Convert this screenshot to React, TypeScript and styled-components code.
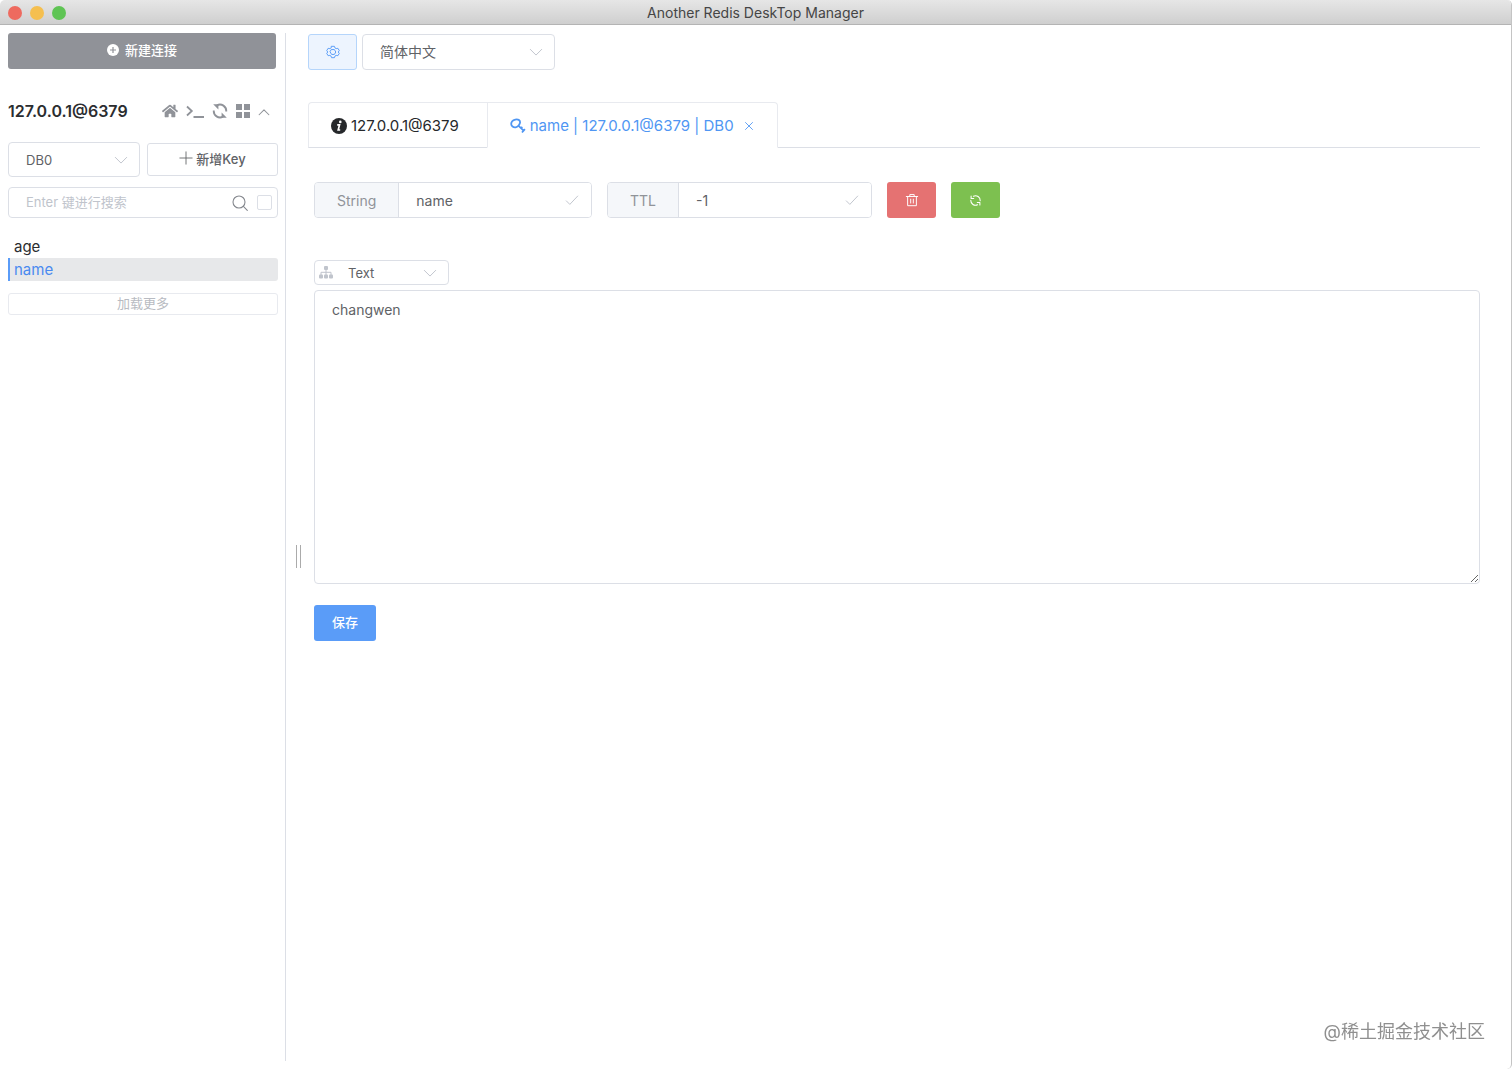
import React, { useState } from "react";
import styled, { createGlobalStyle, css } from "styled-components";
import { FaHome } from "react-icons/fa";

const palette = {
  text: "#606266",
  dark: "#2b2d30",
  muted: "#909399",
  placeholder: "#c0c4cc",
  border: "#dcdfe6",
  lightBorder: "#e8eaef",
  primary: "#5a9cf8",
  danger: "#e57272",
  success: "#7dc050",
  info: "#909298",
};

const GlobalStyle = createGlobalStyle`
  *, *::before, *::after { box-sizing: border-box; }
  body {
    margin: 0;
    background: #fff;
    color: ${palette.dark};
    font-family: Inter, "Noto Sans CJK SC", sans-serif;
    font-size: 15px;
  }
  button, input, select, textarea { font: inherit; color: inherit; margin: 0; }
  button { cursor: pointer; padding: 0; }
`;

const Window = styled.div`
  min-height: 100vh;
  display: flex;
  flex-direction: column;
  border-right: 1px solid #c4c4c4;
  border-radius: 5px;
  overflow: hidden;
`;

const TitleBar = styled.header`
  height: 25px;
  display: grid;
  grid-template-columns: 1fr auto 1fr;
  align-items: center;
  padding: 1px 8px 0 8px;
  background: linear-gradient(#e6e6e6, #cfcfcf);
  border-bottom: 1px solid #b4b4b4;
`;

const Lights = styled.div`
  display: flex;
  gap: 8px;
`;

const Light = styled.button<{ $color: string }>`
  width: 14px;
  height: 14px;
  border: 0;
  border-radius: 50%;
  background: ${(p) => p.$color};
`;

const WindowTitle = styled.h1`
  margin: 0;
  font-size: 14px;
  line-height: 20px;
  font-weight: 400;
  color: #454545;
`;

const Body = styled.div`
  flex: 1;
  display: flex;
  padding: 8px 0;
`;

const Sidebar = styled.aside`
  flex: 0 0 286px;
  border-right: 1px solid ${palette.border};
  padding: 0 7px 0 8px;
`;

const buttonBase = css`
  display: flex;
  align-items: center;
  justify-content: center;
  border-radius: 3px;
  font-size: 13px;
`;

const textButton = css`
  ${buttonBase}
  padding-bottom: 3px;
`;

const NewConnection = styled.button`
  ${textButton}
  width: calc(100% - 2px);
  height: 36px;
  gap: 6px;
  border: 0;
  color: #fff;
  background: ${palette.info};
  font-weight: 500;
`;

const ConnectionHead = styled.div`
  display: flex;
  align-items: center;
  justify-content: space-between;
  height: 24px;
  margin-top: 30px;
  padding-right: 8px;
`;

const ConnectionName = styled.h2`
  margin: 0;
  font-size: 16px;
  line-height: 24px;
  font-weight: 600;
`;

const IconRow = styled.div`
  display: flex;
  align-items: center;
  gap: 8px;
  color: ${palette.muted};
`;

const IconButton = styled.button`
  display: flex;
  border: 0;
  background: none;
`;

const Row = styled.div<{ $gap: number; $top?: number }>`
  display: flex;
  align-items: center;
  gap: ${(p) => p.$gap}px;
  margin-top: ${(p) => p.$top ?? 0}px;
`;

type Size = "mini" | "small" | "medium";

const SelectBox = styled.div<{ $width: number }>`
  position: relative;
  flex: 0 0 ${(p) => p.$width}px;
`;

const heights: Record<Size, number> = { mini: 25, small: 35, medium: 36 };

const NativeSelect = styled.select<{ $size: Size; $indent: number }>`
  display: block;
  appearance: none;
  width: 100%;
  height: ${(p) => heights[p.$size]}px;
  padding: 0 30px ${(p) => (p.$size === "medium" ? 2 : 0)}px ${(p) => p.$indent}px;
  border: 1px solid ${palette.border};
  border-radius: 4px;
  background: #fff;
  color: ${palette.text};
  font-size: ${(p) => (p.$size === "medium" ? 14 : 13)}px;
`;

const Affix = styled.span<{ $side: "left" | "right"; $offset: number }>`
  position: absolute;
  top: 0;
  bottom: 0;
  ${(p) => p.$side}: ${(p) => p.$offset}px;
  display: flex;
  align-items: center;
  color: ${palette.placeholder};
  pointer-events: none;
`;

const NewKey = styled.button`
  ${textButton}
  flex: 1 1 0;
  height: 33px;
  gap: 3px;
  border: 1px solid ${palette.border};
  background: #fff;
  color: ${palette.text};
  font-weight: 500;
`;

const SearchBox = styled.div`
  display: flex;
  align-items: center;
  height: 31px;
  margin-top: 10px;
  padding: 0 5px 0 17px;
  border: 1px solid ${palette.border};
  border-radius: 4px;
  color: #85888e;
`;

const SearchInput = styled.input`
  flex: 1;
  min-width: 0;
  border: 0;
  padding: 0 0 2px;
  outline: 0;
  background: none;
  font-size: 13px;
  &::placeholder { color: ${palette.placeholder}; }
`;

const ExactCheck = styled.input`
  appearance: none;
  width: 15px;
  height: 15px;
  margin-left: 9px;
  border: 1px solid ${palette.border};
  border-radius: 2px;
  &:checked { background: ${palette.primary}; }
`;

const KeyList = styled.ul`
  list-style: none;
  margin: 17px 0 0;
  padding: 0;
`;

const KeyItem = styled.button<{ $active: boolean }>`
  display: block;
  width: 100%;
  height: 23px;
  padding: 0 4px;
  border: 0;
  border-left: 2px solid ${(p) => (p.$active ? palette.primary : "transparent")};
  border-radius: 0 3px 3px 0;
  background: ${(p) => (p.$active ? "#e7e8ea" : "none")};
  color: ${(p) => (p.$active ? "#4a8af0" : palette.dark)};
  text-align: left;
  line-height: 24px;
`;

const LoadMore = styled.button`
  ${textButton}
  width: 100%;
  height: 22px;
  margin-top: 12px;
  border: 1px solid ${palette.lightBorder};
  background: #fff;
  color: #b8bbc2;
`;

const Splitter = styled.div`
  flex: 0 0 22px;
  display: flex;
  align-items: center;
  justify-content: center;
  padding: 18px 0 0 3px;
  cursor: col-resize;
  &::before {
    content: "";
    width: 5px;
    height: 23px;
    border: solid #ababab;
    border-width: 0 1px;
  }
`;

const Main = styled.main`
  flex: 1;
  min-width: 0;
  padding: 1px 31px 0 0;
`;

const SettingsButton = styled.button`
  ${buttonBase}
  width: 49px;
  height: 36px;
  border: 1px solid #b5d5fb;
  background: #edf4fe;
  color: ${palette.primary};
`;

const Tabs = styled.div`
  display: flex;
  height: 46px;
  margin-top: 32px;
  border-bottom: 1px solid ${palette.border};
`;

const Tab = styled.button<{ $active: boolean }>`
  display: flex;
  align-items: center;
  height: 46px;
  gap: 4px;
  padding: 1px ${(p) => (p.$active ? 21 : 28)}px 0 22px;
  border: 1px solid ${palette.lightBorder};
  border-right-width: ${(p) => (p.$active ? 1 : 0)}px;
  border-bottom-color: ${(p) => (p.$active ? "#fff" : palette.border)};
  border-radius: ${(p) => (p.$active ? "0 4px 0 0" : "4px 0 0 0")};
  background: #fff;
  color: ${(p) => (p.$active ? "#4f96f3" : "#26282b")};
  white-space: nowrap;
`;

const CloseMark = styled.span`
  display: flex;
  margin-left: 4px;
`;

const Panel = styled.section`
  padding: 34px 0 0 6px;
`;

const Group = styled.label<{ $width: number }>`
  display: flex;
  position: relative;
  width: ${(p) => p.$width}px;
  height: 36px;
  border: 1px solid ${palette.border};
  border-radius: 4px;
  overflow: hidden;
`;

const Prepend = styled.span`
  display: flex;
  align-items: center;
  padding: 0 22px;
  border-right: 1px solid ${palette.border};
  background: #f5f7fa;
  color: ${palette.muted};
  font-size: 14px;
`;

const GroupInput = styled.input`
  flex: 1;
  min-width: 0;
  padding: 0 34px 0 17px;
  border: 0;
  outline: 0;
  color: ${palette.text};
  font-size: 14px;
`;

const ActionButton = styled.button<{ $color: string }>`
  ${buttonBase}
  width: 49px;
  height: 36px;
  border: 0;
  color: #fff;
  background: ${(p) => p.$color};
`;

const ValueArea = styled.textarea`
  display: block;
  width: 100%;
  height: 294px;
  margin-top: 5px;
  padding: 8px 17px;
  border: 1px solid ${palette.border};
  border-radius: 4px;
  outline: 0;
  resize: vertical;
  color: ${palette.text};
  font-size: 14px;
  line-height: 22px;
`;

const SaveButton = styled.button`
  ${textButton}
  width: 62px;
  height: 36px;
  margin-top: 21px;
  border: 0;
  color: #fff;
  background: ${palette.primary};
  font-weight: 500;
`;

const Watermark = styled.div`
  position: fixed;
  right: 27px;
  bottom: 24px;
  font-size: 18px;
  line-height: 26px;
  color: #8f8f8f;
  pointer-events: none;
`;

interface LineIconProps {
  size: number;
  width?: number;
  children: React.ReactNode;
}

const LineIcon = ({ size, width = 1, children }: LineIconProps) => (
  <svg
    width={size}
    height={size}
    viewBox="0 0 16 16"
    fill="none"
    stroke="currentColor"
    strokeWidth={width}
    strokeLinecap="round"
    strokeLinejoin="round"
    aria-hidden="true"
  >
    {children}
  </svg>
);

const Chevron = () => (
  <LineIcon size={14} width={1.1}><path d="M1.5 5 8 11.5 14.5 5" /></LineIcon>
);
const Check = () => (
  <LineIcon size={14} width={1.1}><path d="M1.5 9 5.5 13 14.5 3.5" /></LineIcon>
);
const PlusCircle = () => (
  <svg width="12" height="12" viewBox="0 0 12 12" aria-hidden="true">
    <circle cx="6" cy="6" r="6" fill="currentColor" />
    <path d="M3 6h6M6 3v6" stroke={palette.info} strokeWidth="1.2" />
  </svg>
);
const Terminal = () => (
  <svg width="18" height="16" viewBox="0 0 18 16" fill="none" stroke="currentColor" strokeWidth="1.8" aria-hidden="true">
    <path d="M1 3.5 5.8 8 1 12.5M7.5 14H18" />
  </svg>
);
const RefreshBold = () => (
  <svg width="16" height="16" viewBox="0 0 16 16" aria-hidden="true">
    <path d="M5 2.300A6.300 6.300 0 0 1 14.200 8.500M11 13.700A6.300 6.300 0 0 1 1.800 7.500" fill="none" stroke="currentColor" strokeWidth="1.9" />
    <path d="M1.200 1.200h5.200v5.200zM14.800 14.800H9.600V9.600z" fill="currentColor" />
  </svg>
);
const Grid = () => (
  <svg width="14" height="14" viewBox="0 0 14 14" fill="currentColor" aria-hidden="true">
    <path d="M0 0h6v6H0zM8 0h6v6H8zM0 8h6v6H0zM8 8h6v6H8z" />
  </svg>
);
const Gear = () => (
  <LineIcon size={14} width={1.1}>
    <path d="M6.4 1.5h3.2l.7 1.9 1.3.7 2-.3 1.6 2.7-1.3 1.5 1.3 1.5-1.6 2.7-2-.3-1.3.7-.7 1.9H6.4l-.7-1.9-1.3-.7-2 .3L.8 9.5 2.1 8 .8 6.5l1.6-2.7 2 .3 1.3-.7z" />
    <path d="M6.4 5.2h3.2L11.2 8l-1.6 2.8H6.4L4.8 8z" />
  </LineIcon>
);
const Info = () => (
  <svg width="16" height="16" viewBox="0 0 16 16" aria-hidden="true">
    <circle cx="8" cy="8" r="8" fill="currentColor" />
    <circle cx="9.3" cy="3.9" r="1.3" fill="#fff" />
    <path d="M6.200 6.900h2.300L7.200 12h2" fill="none" stroke="#fff" strokeWidth="1.700" />
  </svg>
);
const KeyIcon = () => (
  <svg width="16" height="16" viewBox="0 0 16 16" fill="none" stroke="currentColor" strokeWidth="1.8" aria-hidden="true">
    <path d="M5.3 1.6c2.600-.7 5 .5 4.800 2.800C9.900 6.500 7.800 9 5.600 9.300 3.300 9.600 1.200 8 1.200 5.900 1.200 3.900 3.200 2.200 5.300 1.600z" />
    <path d="M8.300 7.600 14.200 13.200M12.300 8.800l-1.500 1.500M14.900 11.200l-2.900 3.300" />
  </svg>
);
const Trash = () => (
  <LineIcon size={14} width={1.1}>
    <path d="M1.500 4h13M5.500 4V1.800h5V4M3 4v10.500h10V4M6.500 7v4.500M9.500 7v4.500" />
  </LineIcon>
);
const Refresh = () => (
  <LineIcon size={13} width={1.3}>
    <path d="M5.500 2.700A5.800 5.800 0 0 1 13.800 8.200M10.500 13.300A5.800 5.800 0 0 1 2.200 7.800M5.800 5.600H2.600V2.400M10.200 10.400h3.200v3.200" />
  </LineIcon>
);
const Sitemap = () => (
  <svg width="14" height="13" viewBox="0 0 14 13" fill="currentColor" aria-hidden="true">
    <rect x="5" y="0" width="4" height="4" rx="1" />
    <rect x="0" y="8.500" width="4" height="4" rx="1" />
    <rect x="5" y="8.500" width="4" height="4" rx="1" />
    <rect x="10" y="8.500" width="4" height="4" rx="1" />
    <path d="M7 4v5M2 9V6.300h10V9" fill="none" stroke="currentColor" strokeWidth="1" />
  </svg>
);

interface SelectProps {
  label: string;
  options: string[];
  size: Size;
  indent: number;
  width: number;
  prefix?: React.ReactNode;
}

const Select = ({ label, options, size, indent, width, prefix }: SelectProps) => (
  <SelectBox $width={width}>
    <NativeSelect aria-label={label} $size={size} $indent={indent}>
      {options.map((o) => <option key={o}>{o}</option>)}
    </NativeSelect>
    {prefix && <Affix $side="left" $offset={5}>{prefix}</Affix>}
    <Affix $side="right" $offset={12}><Chevron /></Affix>
  </SelectBox>
);

export default function App() {
  const [active, setActive] = useState("name");

  return (
    <>
      <GlobalStyle />
      <Window>
        <TitleBar>
          <Lights>
            <Light $color="#ee6a5f" aria-label="Close" />
            <Light $color="#f5bf4f" aria-label="Minimize" />
            <Light $color="#5fc454" aria-label="Zoom" />
          </Lights>
          <WindowTitle>Another Redis DeskTop Manager</WindowTitle>
        </TitleBar>
        <Body>
          <Sidebar>
            <NewConnection><PlusCircle />新建连接</NewConnection>
            <ConnectionHead>
              <ConnectionName>127.0.0.1@6379</ConnectionName>
              <IconRow>
                <IconButton aria-label="Home"><FaHome size={16} /></IconButton>
                <IconButton aria-label="Console"><Terminal /></IconButton>
                <IconButton aria-label="Refresh"><RefreshBold /></IconButton>
                <IconButton aria-label="Menu"><Grid /></IconButton>
                <IconButton aria-label="Collapse">
                  <LineIcon size={12} width={1.4}><path d="M1.500 13 8 6.500 14.500 13" /></LineIcon>
                </IconButton>
              </IconRow>
            </ConnectionHead>
            <Row $gap={7} $top={19}>
              <Select label="Database" options={["DB0", "DB1"]} size="small" indent={17} width={132} />
              <NewKey>
                <LineIcon size={14}><path d="M1 8h14M8 1v14" /></LineIcon>
                新增Key
              </NewKey>
            </Row>
            <SearchBox>
              <SearchInput aria-label="Search keys" placeholder="Enter 键进行搜索" />
              <LineIcon size={16} width={1.1}>
                <circle cx="7" cy="7" r="6" />
                <path d="M11.400 11.400 15.300 15.300" />
              </LineIcon>
              <ExactCheck type="checkbox" aria-label="Exact search" />
            </SearchBox>
            <KeyList>
              {["age", "name"].map((k) => (
                <li key={k}>
                  <KeyItem $active={k === active} onClick={() => setActive(k)}>{k}</KeyItem>
                </li>
              ))}
            </KeyList>
            <LoadMore>加载更多</LoadMore>
          </Sidebar>
          <Splitter />
          <Main>
            <Row $gap={5}>
              <SettingsButton aria-label="Settings"><Gear /></SettingsButton>
              <Select label="Language" options={["简体中文", "English"]} size="medium" indent={17} width={193} />
            </Row>
            <Tabs role="tablist">
              <Tab role="tab" $active={false}><Info />127.0.0.1@6379</Tab>
              <Tab role="tab" aria-selected $active>
                <KeyIcon />name | 127.0.0.1@6379 | DB0
                <CloseMark>
                  <LineIcon size={14}><path d="M4 4 12 12M12 4 4 12" /></LineIcon>
                </CloseMark>
              </Tab>
            </Tabs>
            <Panel>
              <Row $gap={15}>
                <Group $width={278}>
                  <Prepend>String</Prepend>
                  <GroupInput defaultValue="name" />
                  <Affix $side="right" $offset={12}><Check /></Affix>
                </Group>
                <Group $width={265}>
                  <Prepend>TTL</Prepend>
                  <GroupInput defaultValue="-1" />
                  <Affix $side="right" $offset={12}><Check /></Affix>
                </Group>
                <ActionButton $color={palette.danger} aria-label="Delete"><Trash /></ActionButton>
                <ActionButton $color={palette.success} aria-label="Reload"><Refresh /></ActionButton>
              </Row>
              <Row $gap={0} $top={42}>
                <Select label="Format" options={["Text", "Json"]} size="mini" indent={33} width={135} prefix={<Sitemap />} />
              </Row>
              <ValueArea aria-label="Value" defaultValue="changwen" />
              <SaveButton>保存</SaveButton>
            </Panel>
          </Main>
        </Body>
      </Window>
      <Watermark>@稀土掘金技术社区</Watermark>
    </>
  );
}
